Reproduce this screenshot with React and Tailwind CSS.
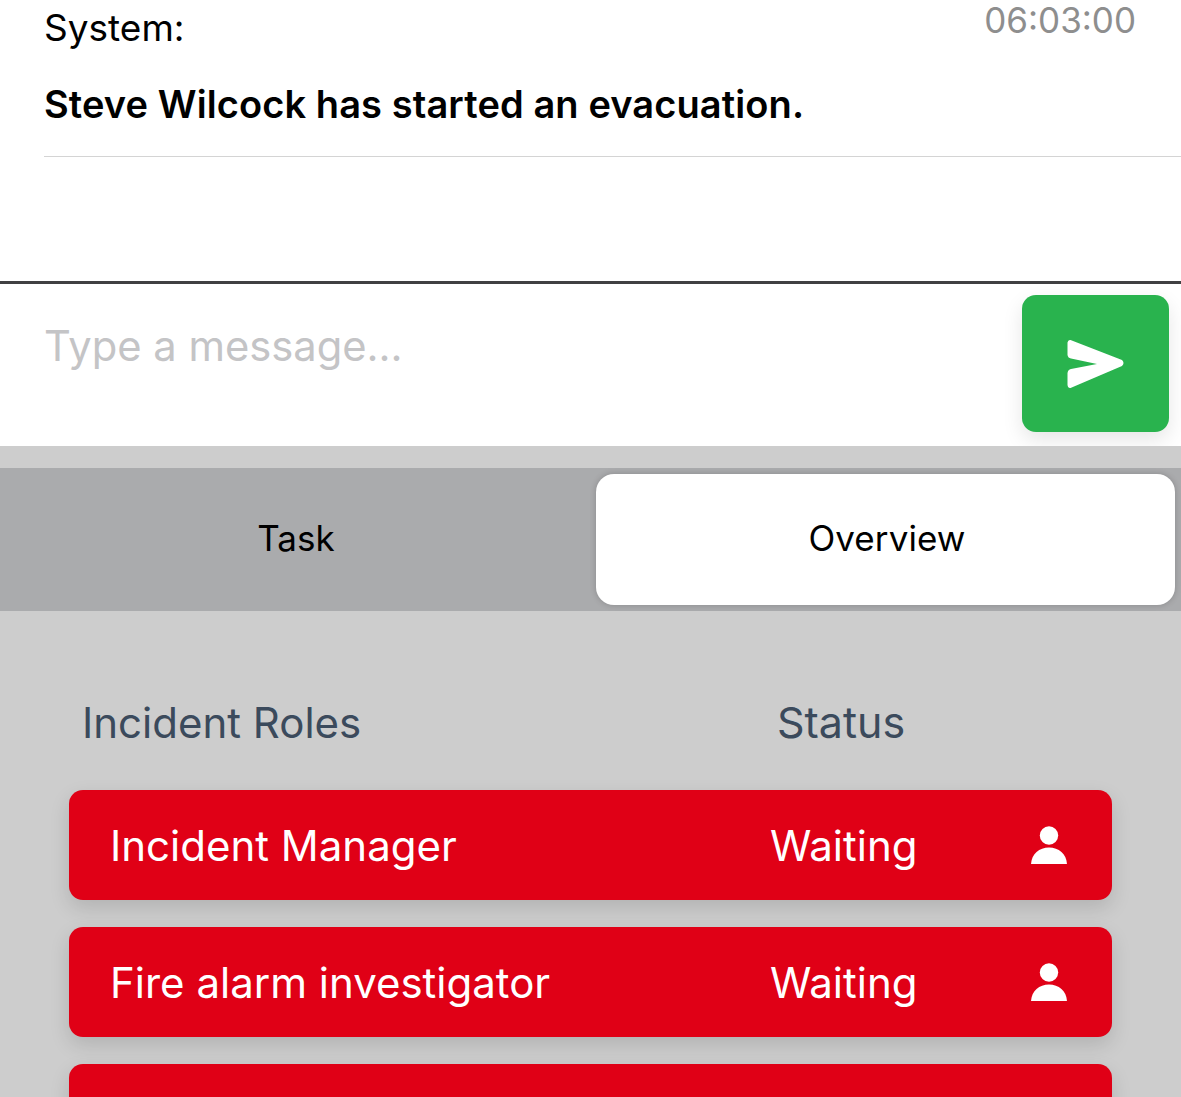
const ROLES = ['Incident Manager', 'Fire alarm investigator', '']

function PersonIcon() {
  return (
    <svg className="mb-[2px]" width="36" height="38" viewBox="0 0 36 38" fill="white">
      <circle cx="18" cy="9.5" r="9.2" />
      <path d="M0 38.5 C0.5 28 8 21.5 18 21.5 C28 21.5 35.500 28 36 38.500 Z" />
    </svg>
  )
}

function SendIcon() {
  return (
    <svg width="58" height="50" viewBox="0 0 58 50" fill="white">
      <path
        d="M3.500 1 L55 21 Q58 24 55 27 L3.500 49 Q1 49.500 0.500 46 L0.500 34 Q1 30.500 4 30 L30 25 L4 19.500 Q1 19 0.500 16 L0.500 3.500 Q1 0.500 3.500 1 Z"
      />
    </svg>
  )
}

function RoleRow({ name }) {
  return (
    <div className="flex h-[110px] shrink-0 items-center rounded-[14px] bg-[#e00016] pl-[41px] pr-[45px] pt-[1px] text-[42px] text-white shadow-[0_8px_20px_rgba(0,0,0,0.13)]">
      <span className="w-[660px]">{name}</span>
      {name && <span className="flex-1">Waiting</span>}
      {name && <PersonIcon />}
    </div>
  )
}

export default function App() {
  return (
    <div className="flex h-[1097px] w-[1181px] flex-col overflow-hidden bg-white font-['Inter',sans-serif]">
      <div className="h-[281px] shrink-0 pl-[44px]">
        <div className="flex h-[54px] items-start justify-between pr-[45px]">
          <span className="pt-[6px] text-[37px] leading-[43px] text-black">System:</span>
          <span className="text-[35px] leading-[40px] text-[#8e8e8e]">06:03:00</span>
        </div>
        <div className="border-b border-[#d4d4d4] pb-[28px] pt-[26px] text-[38px] leading-[48px] font-semibold tracking-[0.1px] text-black">
          Steve Wilcock has started an evacuation.
        </div>
      </div>

      <div className="flex h-[165px] shrink-0 items-start justify-between border-t-[3px] border-[#404042] pl-[44px] pr-3 pt-[11px]">
        <span className="pt-[26px] text-[41.7px] leading-[50px] text-[#c4c4c6]">Type a message...</span>
        <div className="flex h-[137px] w-[147px] items-center justify-center rounded-[14px] bg-[#29b34e] shadow-[0_8px_20px_rgba(0,0,0,0.1)]">
          <SendIcon />
        </div>
      </div>

      <div className="flex flex-1 flex-col bg-[#cdcdcd] pt-[22px]">
        <div className="flex h-[143px] shrink-0 items-center bg-[#aaabad] pr-[6px]">
          <div className="flex w-[592px] justify-center pb-[3px] text-[35px] text-black">Task</div>
          <div className="ml-[4px] flex h-[131px] flex-1 items-center justify-center rounded-[18px] bg-white pb-[3px] pl-[3px] text-[35px] tracking-[0.1px] text-black shadow-[0_0_6px_rgba(0,0,0,0.2)]">
            Overview
          </div>
        </div>

        <div className="flex h-[179px] shrink-0 items-center pl-[82px] pt-[44px] text-[42px] text-[#3b4a5c]">
          <span className="w-[695px]">Incident Roles</span>
          <span className="text-[43px]">Status</span>
        </div>

        <div className="flex flex-col gap-[27px] px-[69px]">
          {ROLES.map((name, i) => (
            <RoleRow key={i} name={name} />
          ))}
        </div>
      </div>
    </div>
  )
}
